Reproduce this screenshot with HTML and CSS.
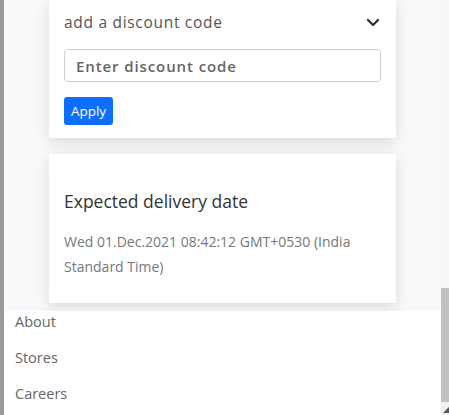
FILE: index.html
```html
<!DOCTYPE html>
<html>
<head>
<meta charset="utf-8">
<link rel="stylesheet" href="styles.css">
</head>
<body>
<div class="frame">
  <div class="leftbar"></div>
  <div class="main">
    <section class="content">
      <div class="card card-discount">
        <div class="disc-head">
          <span>add a discount code</span>
          <svg class="chev" width="14" height="10" viewBox="0 0 14 10"><path d="M2 2 L7 7 L12 2" fill="none" stroke="#333" stroke-width="2.4" stroke-linecap="round" stroke-linejoin="round"/></svg>
        </div>
        <input class="code" type="text" placeholder="Enter discount code">
        <button class="apply">Apply</button>
      </div>
      <div class="card card-delivery">
        <h2 class="title">Expected delivery date</h2>
        <p class="date">Wed 01.Dec.2021 08:42:12 GMT+0530 (India Standard Time)</p>
      </div>
    </section>
    <footer class="footer">
      <a class="flink">About</a>
      <a class="flink">Stores</a>
      <a class="flink">Careers</a>
    </footer>
  </div>
  <div class="scroll">
    <div class="track"></div>
    <div class="thumb"></div>
    <div class="arrow">&#9698;</div>
  </div>
</div>
</body>
</html>
```

FILE: styles.css
```css
html, body { margin: 0; padding: 0; }
body {
  font-family: "Open Sans", Lato, sans-serif;
  width: 449px;
  height: 415px;
  overflow: hidden;
  background: #fff;
}
.frame { display: flex; height: 415px; }
.leftbar { width: 4px; background: #9a9a9a; flex: none; }
.main { flex: 1; display: flex; flex-direction: column; min-width: 0; }
.content {
  flex: none;
  background: #f8f9fa;
  height: 311px;
  box-sizing: border-box;
  padding-left: 45px;
  display: flex;
  flex-direction: column;
  gap: 16px;
}
.card {
  width: 347px;
  flex: none;
  background: #fff;
  box-shadow: 0 4px 14px rgba(0,0,0,0.13);
  box-sizing: border-box;
  padding: 0 15px;
}
.card-discount { height: 138px; padding-top: 12px; }
.disc-head {
  display: flex;
  justify-content: space-between;
  align-items: center;
  height: 20px;
  font-size: 15.5px;
  letter-spacing: 0.7px;
  color: #555;
}
.chev { margin-right: 1px; margin-top: 1px; }
.code {
  display: block;
  margin-top: 17px;
  width: 317px;
  height: 33px;
  box-sizing: border-box;
  border: 1px solid #cfcfcf;
  border-radius: 4px;
  padding: 0 11px;
  font-family: inherit;
  font-size: 15px;
  font-weight: 600;
  letter-spacing: 0.9px;
  outline: none;
}
.code::placeholder { color: #666; }
.apply {
  display: block;
  margin-top: 15px;
  height: 28px;
  width: 49px;
  padding: 0;
  border: none;
  border-radius: 3px;
  background: #0d6efd;
  color: #fff;
  font-family: inherit;
  font-size: 13.5px;
}
.card-delivery { height: 149px; padding-top: 35px; }
.title {
  margin: 0;
  font-size: 17.5px;
  font-weight: 400;
  color: #333;
  line-height: 24px;
}
.date {
  margin: 16px 0 0;
  font-size: 14px;
  line-height: 25px;
  color: #777;
}
.footer {
  flex: 1;
  background: #fff;
  display: flex;
  flex-direction: column;
  padding-left: 11px;
  margin-right: 1px;
}
.flink {
  font-size: 14.5px;
  line-height: 22px;
  margin-bottom: 14px;
  color: #666;
}
.scroll {
  width: 8px;
  flex: none;
  display: flex;
  flex-direction: column;
  background: #f1f1f1;
}
.track { height: 288px; background: #f6f7f9; }
.thumb { height: 114px; background: #c1c1c1; }
.arrow { font-size: 8px; color: #555; line-height: 13px; text-align: right; }
```
